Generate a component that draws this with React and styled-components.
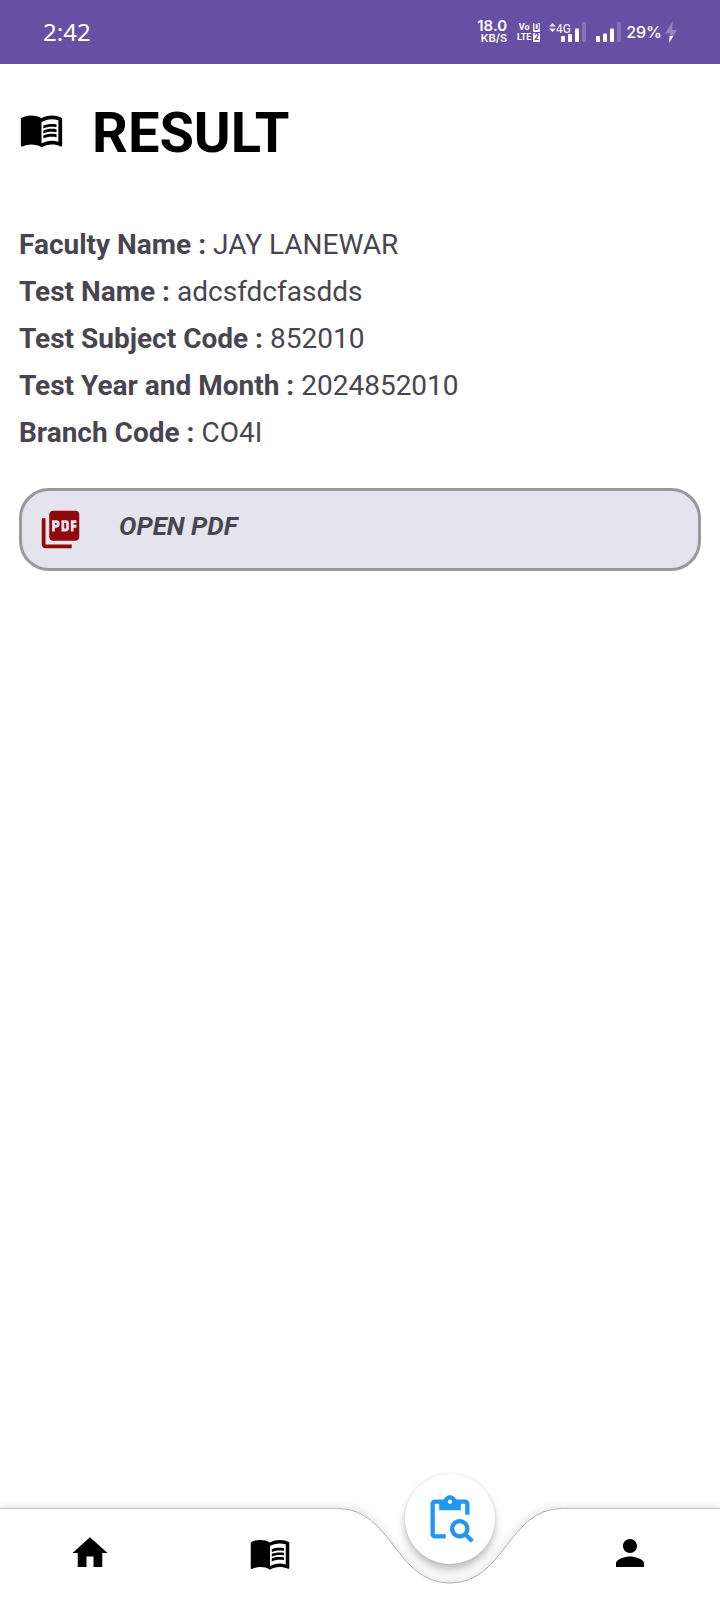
import React from "react";
import styled, { createGlobalStyle } from "styled-components";
import {
  MdMenuBook,
  MdHome,
  MdPerson,
  MdPictureAsPdf,
  MdContentPasteSearch,
} from "react-icons/md";

const GlobalStyle = createGlobalStyle`
  *, *::before, *::after { box-sizing: border-box; }
  body {
    margin: 0;
    background: #fff;
    color: #49454f;
    font-family: Roboto, "Liberation Sans", sans-serif;
  }
`;

const Screen = styled.div`
  display: flex;
  flex-direction: column;
  min-height: 100vh;
`;

const StatusBar = styled.header`
  display: flex;
  align-items: center;
  justify-content: space-between;
  height: 64px;
  padding: 0 43px;
  background: #6750a3;
  color: #fff;
`;

const Clock = styled.time`
  font: 400 24px/32px "Noto Sans", sans-serif;
`;

const StatusItems = styled.div`
  display: flex;
  align-items: center;
  gap: 9px;
`;

const Speed = styled.div`
  display: flex;
  flex-direction: column;
  align-items: flex-end;
  font: 600 15px/12px Inter, sans-serif;
`;

const SpeedUnit = styled.span`
  font-size: 11px;
  font-weight: 600;
`;

const VolteBadge = styled.div`
  display: grid;
  grid-template-columns: 16px 7px;
  gap: 1px;
  font: 700 9px/9px Roboto, sans-serif;
  text-align: center;
`;

const VolteTile = styled.span`
  border-radius: 1px;
  background: #fff;
  color: #6750a3;
`;

const Battery = styled.div`
  display: flex;
  align-items: center;
  gap: 3px;
  margin-left: -4px;
  font: 500 16px/20px Inter, sans-serif;
`;

const Content = styled.main`
  flex: 1;
  padding: 43px 19px;
`;

const TitleRow = styled.div`
  display: flex;
  align-items: flex-start;
  gap: 28px;
  color: #000;
`;

const Title = styled.h1`
  margin: 0;
  font-size: 56px;
  font-weight: 700;
  line-height: 52px;
`;

const Details = styled.dl`
  margin: 62px 0 32px;
  font-size: 28px;
  line-height: 47px;
`;

const Detail = styled.div`
  display: flex;
  gap: 7px;
`;

const DetailLabel = styled.dt`
  font-weight: 700;
`;

const DetailValue = styled.dd`
  margin: 0;
  font-weight: 400;
`;

const PdfButton = styled.button`
  display: flex;
  align-items: flex-start;
  gap: 36px;
  width: 100%;
  padding: 16px;
  border: 3px solid #999997;
  border-radius: 30px;
  background: #e5e3ed;
  color: #49454f;
  font: italic 700 26px/38px Roboto, sans-serif;
  text-align: left;

  svg { color: #900a0b; }
`;

const BottomNav = styled.nav`
  position: relative;
  height: 92px;
`;

const NavSurface = styled.div`
  position: absolute;
  inset: 0;
  display: flex;
  filter: drop-shadow(0 -1px 5px rgba(0, 0, 0, 0.12));
`;

const SurfaceSide = styled.div`
  flex: ${({ $fixed }) => ($fixed ? "0 0 calc(62.5% - 112px)" : "1")};
  border-top: 1px solid #c4c4c4;
  background: #fff;
`;

const NavItems = styled.div`
  position: relative;
  display: grid;
  grid-template-columns: repeat(4, 1fr);
  height: 90px;
`;

const NavLink = styled.a`
  display: flex;
  align-items: center;
  justify-content: center;
  color: #000;
`;

const ActiveLink = styled.a`
  position: absolute;
  top: -34px;
  left: calc(62.5% - 45px);
  display: flex;
  align-items: center;
  justify-content: center;
  width: 90px;
  height: 90px;
  border-radius: 50%;
  background: #fff;
  color: #2196f3;
  box-shadow: 0 6px 9px rgba(0, 0, 0, 0.25), 0 0 3px rgba(0, 0, 0, 0.1);
`;

const details = [
  ["Faculty Name :", "JAY LANEWAR"],
  ["Test Name :", "adcsfdcfasdds"],
  ["Test Subject Code :", "852010"],
  ["Test Year and Month :", "2024852010"],
  ["Branch Code :", "CO4I"],
];

function SignalBars() {
  return (
    <svg width="26" height="20" viewBox="0 0 26 20" fill="#fff" aria-hidden="true">
      <rect x="1" y="14" width="4" height="6" rx="1" />
      <rect x="8" y="11.5" width="4" height="8.5" rx="1" />
      <rect x="15" y="6.5" width="4" height="13.5" rx="1" />
      <rect x="22" y="0" width="4" height="20" rx="1" opacity="0.2" />
    </svg>
  );
}

function MobileSignal() {
  return (
    <svg width="37" height="20" viewBox="0 0 37 20" fill="#fff" aria-hidden="true">
      <path d="M0 4.5 3.5 1 7 4.5zM0 6.5 3.5 10 7 6.5z" opacity="0.85" />
      <text x="7" y="11" fontFamily="Roboto, sans-serif" fontSize="12" fontWeight="500" opacity="0.85">4G</text>
      <rect x="12" y="14" width="4" height="6" rx="1" />
      <rect x="19" y="12" width="4" height="8" rx="1" />
      <rect x="26" y="6.5" width="4" height="13.5" rx="1" />
      <rect x="33" y="0" width="4" height="20" rx="1" opacity="0.2" />
    </svg>
  );
}

function ChargeBolt() {
  return (
    <svg width="12" height="22" viewBox="0 0 12 22" fill="#fff" aria-hidden="true">
      <path d="M8 0 0 12.5h5L4 22l8-13H7z" opacity="0.3" />
      <path d="M4.7 15H8.3L4 22z" />
    </svg>
  );
}

function Notch() {
  return (
    <svg width="224" height="92" viewBox="0 0 224 92" aria-hidden="true">
      <path d="M0 0C54 0 57 75 112 75S170 0 224 0V92H0z" fill="#fff" />
      <path d="M0 .5C54 .5 57 75 112 75S170 .5 224 .5" fill="none" stroke="#b0b0b0" />
    </svg>
  );
}

export default function App() {
  return (
    <Screen>
      <GlobalStyle />
      <StatusBar>
        <Clock>2:42</Clock>
        <StatusItems>
          <Speed>
            18.0
            <SpeedUnit>KB/S</SpeedUnit>
          </Speed>
          <VolteBadge>
            <span>Vo</span>
            <VolteTile>D</VolteTile>
            <span>LTE</span>
            <VolteTile>2</VolteTile>
          </VolteBadge>
          <MobileSignal />
          <SignalBars />
          <Battery>
            29%
            <ChargeBolt />
          </Battery>
        </StatusItems>
      </StatusBar>
      <Content>
        <TitleRow>
          <MdMenuBook size={45} aria-hidden="true" />
          <Title>RESULT</Title>
        </TitleRow>
        <Details>
          {details.map(([label, value]) => (
            <Detail key={label}>
              <DetailLabel>{label}</DetailLabel>
              <DetailValue>{value}</DetailValue>
            </Detail>
          ))}
        </Details>
        <PdfButton type="button">
          <MdPictureAsPdf size={45} aria-hidden="true" />
          OPEN PDF
        </PdfButton>
      </Content>
      <BottomNav aria-label="Main">
        <NavSurface>
          <SurfaceSide $fixed />
          <Notch />
          <SurfaceSide />
        </NavSurface>
        <NavItems>
          <NavLink href="#home" aria-label="Home">
            <MdHome size={42} />
          </NavLink>
          <NavLink href="#library" aria-label="Library">
            <MdMenuBook size={42} />
          </NavLink>
          <span />
          <NavLink href="#profile" aria-label="Profile">
            <MdPerson size={42} />
          </NavLink>
          <ActiveLink href="#results" aria-label="Results" aria-current="page">
            <MdContentPasteSearch size={52} />
          </ActiveLink>
        </NavItems>
      </BottomNav>
    </Screen>
  );
}
